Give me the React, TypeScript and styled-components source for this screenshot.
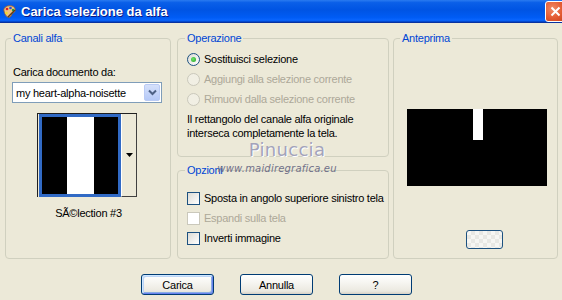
import React from 'react';
import styled, { createGlobalStyle } from 'styled-components';

const GlobalStyle = createGlobalStyle`
  html, body {
    margin: 0;
    padding: 0;
  }
  body {
    width: 562px;
    height: 300px;
    overflow: hidden;
    background: #ece9d8;
    font-family: "Liberation Sans", Arial, sans-serif;
    font-size: 11px;
    letter-spacing: -0.25px;
    color: #000;
  }
`;

const App: React.FC = () => {
    return (
        <>
            <GlobalStyle />
            <Window>
                <TitleBar>
                    <AppIcon />
                    <TitleText>Carica selezione da alfa</TitleText>
                    <CloseButton>
                        <svg width="11" height="11" viewBox="0 0 11 11">
                            <path d="M1.5 1.5 L9.5 9.5 M9.5 1.5 L1.5 9.5" stroke="#fff" strokeWidth="2" />
                        </svg>
                    </CloseButton>
                </TitleBar>

                <Body>
                    <Group $w={166} $h={227} $padL={7}>
                        <Legend>Canali alfa</Legend>
                        <FieldLabel>Carica documento da:</FieldLabel>
                        <Combo>
                            <ComboText>my heart-alpha-noisette</ComboText>
                            <ComboArrow>
                                <svg width="9" height="7" viewBox="0 0 9 7">
                                    <path d="M1 1.5 L4.5 5 L8 1.5" fill="none" stroke="#4d6185" strokeWidth="2" />
                                </svg>
                            </ComboArrow>
                        </Combo>
                        <Thumb>
                            <ThumbImage>
                                <svg width="76" height="77" viewBox="0 0 76 77">
                                    <rect width="76" height="77" fill="#000" />
                                    <rect x="25" width="27" height="77" fill="#fff" />
                                </svg>
                            </ThumbImage>
                            <ThumbDrop>
                                <svg width="7" height="4" viewBox="0 0 7 4">
                                    <path d="M0 0 H7 L3.5 4 Z" fill="#000" />
                                </svg>
                            </ThumbDrop>
                        </Thumb>
                        <Caption>SÃ©lection #3</Caption>
                    </Group>

                    <MiddleColumn>
                        <Group $w={212} $h={125} $padL={9}>
                            <Legend>Operazione</Legend>
                            <OptionList $top={4}>
                                <OptionRow>
                                    <Radio $checked />
                                    <OptionText>Sostituisci selezione</OptionText>
                                </OptionRow>
                                <OptionRow>
                                    <Radio $disabled />
                                    <OptionText $disabled>Aggiungi alla selezione corrente</OptionText>
                                </OptionRow>
                                <OptionRow>
                                    <Radio $disabled />
                                    <OptionText $disabled>Rimuovi dalla selezione corrente</OptionText>
                                </OptionRow>
                            </OptionList>
                            <Note>
                                Il rettangolo del canale alfa originale
                                <br />
                                interseca completamente la tela.
                            </Note>
                        </Group>

                        <Group $w={212} $h={95} $padL={9}>
                            <Legend>Opzioni</Legend>
                            <OptionList $top={11}>
                                <OptionRow>
                                    <Check />
                                    <OptionText>Sposta in angolo superiore sinistro tela</OptionText>
                                </OptionRow>
                                <OptionRow>
                                    <Check $disabled />
                                    <OptionText $disabled>Espandi sulla tela</OptionText>
                                </OptionRow>
                                <OptionRow>
                                    <Check />
                                    <OptionText>Inverti immagine</OptionText>
                                </OptionRow>
                            </OptionList>
                        </Group>

                        <Watermark>
                            <WatermarkName>Pinuccia</WatermarkName>
                            <WatermarkUrl>www.maidiregrafica.eu</WatermarkUrl>
                        </Watermark>
                    </MiddleColumn>

                    <Group $w={165} $h={227} $padL={8}>
                        <Legend>Anteprima</Legend>
                        <Preview>
                            <svg width="140" height="77" viewBox="0 0 140 77">
                                <rect width="140" height="77" fill="#000" />
                                <rect x="66" width="10" height="31" fill="#fff" />
                            </svg>
                        </Preview>
                        <SwatchButton />
                    </Group>
                </Body>

                <ButtonRow>
                    <DialogButton $default>Carica</DialogButton>
                    <DialogButton>Annulla</DialogButton>
                    <DialogButton>?</DialogButton>
                </ButtonRow>
            </Window>
        </>
    );
};

export default App;

const AppIcon: React.FC = () => (
    <svg width="15" height="15" viewBox="0 0 15 15">
        <path d="M2 7 C1 3 6 1 10 2 C14 3 14 8 11 9 C9 10 10 12 8 13 C5 14 3 11 2 7 Z" fill="#f0c080" stroke="#a0602a" strokeWidth="0.8" />
        <circle cx="5" cy="5" r="1.3" fill="#e02020" />
        <circle cx="8.5" cy="4" r="1.3" fill="#2050e0" />
        <circle cx="11" cy="6" r="1.2" fill="#20a040" />
        <circle cx="4.5" cy="9" r="1.2" fill="#f0e020" />
        <path d="M6 13 L13 6" stroke="#5a3a1a" strokeWidth="1.4" />
    </svg>
);

const Window = styled.div`
    width: 562px;
    height: 300px;
    display: flex;
    flex-direction: column;
    overflow: hidden;
`;

const TitleBar = styled.div`
    height: 22px;
    display: flex;
    align-items: center;
    padding-left: 2px;
    background: linear-gradient(to bottom, #2a7bf0 0%, #0a5fe8 12%, #0054e3 45%, #005cf5 80%, #0a66ff 92%, #003dbb 100%);
    border-bottom: 1px solid #0831a0;
`;

const TitleText = styled.span`
    margin-left: 4px;
    font-family: "Liberation Sans", Arial, sans-serif;
    font-size: 13px;
    font-weight: bold;
    letter-spacing: 0;
    color: #fff;
    text-shadow: 1px 1px 0 #0a1883;
`;

const CloseButton = styled.div`
    margin-left: auto;
    margin-right: -4px;
    width: 21px;
    height: 21px;
    box-sizing: border-box;
    border: 1px solid #fff;
    border-radius: 3px;
    background: radial-gradient(circle at 35% 35%, #f08a66 0%, #e35a32 55%, #c5401c 100%);
    display: flex;
    align-items: center;
    justify-content: center;
`;

const Body = styled.div`
    display: flex;
    gap: 6px;
    padding: 9px 0 0 5px;
`;

const MiddleColumn = styled.div`
    position: relative;
    flex-shrink: 0;
    display: flex;
    flex-direction: column;
    gap: 7px;
    margin-right: -2px;
`;

const Group = styled.fieldset<{ $w: number; $h: number; $padL: number }>`
    box-sizing: border-box;
    flex-shrink: 0;
    min-width: 0;
    width: ${p => p.$w}px;
    height: ${p => p.$h}px;
    margin: 0;
    padding: 0 4px 0 ${p => p.$padL}px;
    border: 1px solid #d0d0bf;
    border-radius: 4px;
    display: flex;
    flex-direction: column;
    align-items: flex-start;
`;

const Legend = styled.legend`
    padding: 0 2px;
    margin-left: -2px;
    line-height: 13px;
    color: #0046d5;
`;

const FieldLabel = styled.div`
    margin-top: 21px;
    line-height: 13px;
`;

const Combo = styled.div`
    margin: 3px 0 0 -1px;
    width: 150px;
    height: 21px;
    box-sizing: border-box;
    border: 1px solid #7f9db9;
    background: #fff;
    display: flex;
    align-items: center;
    padding: 1px;
`;

const ComboText = styled.span`
    flex: 1;
    padding-left: 2px;
`;

const ComboArrow = styled.div`
    width: 16px;
    height: 17px;
    box-sizing: border-box;
    border: 1px solid #bacbf5;
    border-radius: 2px;
    background: linear-gradient(to bottom, #d6e1fb, #b5c9f7);
    display: flex;
    align-items: center;
    justify-content: center;
`;

const Thumb = styled.div`
    margin: 10px 0 0 24px;
    display: flex;
    border-top: 1px solid #202020;
    border-left: 1px solid #202020;
`;

const ThumbImage = styled.div`
    margin-left: 1px;
    border: 3px solid #316ac5;
    display: flex;
`;

const ThumbDrop = styled.div`
    width: 16px;
    box-sizing: border-box;
    border-left: 1px solid #fff;
    border-right: 1px solid #404040;
    border-bottom: 1px solid #404040;
    display: flex;
    align-items: center;
    justify-content: center;
    padding-left: 1px;
`;

const Caption = styled.div`
    align-self: stretch;
    margin-top: 10px;
    padding-right: 2px;
    line-height: 13px;
    text-align: center;
`;

const OptionList = styled.div<{ $top: number }>`
    margin-top: ${p => p.$top}px;
    display: flex;
    flex-direction: column;
`;

const OptionRow = styled.div`
    height: 20px;
    display: flex;
    align-items: center;
    gap: 4px;
`;

const OptionText = styled.span<{ $disabled?: boolean }>`
    color: ${p => (p.$disabled ? '#aca899' : '#000')};
    white-space: nowrap;
`;

const Radio = styled.span<{ $checked?: boolean; $disabled?: boolean }>`
    width: 13px;
    height: 13px;
    box-sizing: border-box;
    border-radius: 50%;
    border: 1px solid ${p => (p.$disabled ? '#cac8bb' : '#1c5180')};
    background: ${p => (p.$disabled ? '#f1efe4' : 'linear-gradient(135deg, #dcdbd5 0%, #ffffff 100%)')};
    display: flex;
    align-items: center;
    justify-content: center;

    &::after {
        content: '';
        display: ${p => (p.$checked ? 'block' : 'none')};
        width: 5px;
        height: 5px;
        border-radius: 50%;
        background: radial-gradient(circle at 40% 40%, #6ee46a, #21a121);
    }
`;

const Check = styled.span<{ $disabled?: boolean }>`
    width: 13px;
    height: 13px;
    box-sizing: border-box;
    border: 1px solid ${p => (p.$disabled ? '#cac8bb' : '#1c5180')};
    background: ${p => (p.$disabled ? '#ffffff' : 'linear-gradient(135deg, #dcdbd5 0%, #ffffff 100%)')};
`;

const Note = styled.div`
    margin-top: 3px;
    line-height: 14px;
`;

const Watermark = styled.div`
    position: absolute;
    left: 40px;
    top: 107px;
    width: 120px;
    display: flex;
    flex-direction: column;
    align-items: center;
    pointer-events: none;
`;

const WatermarkName = styled.span`
    margin-left: 20px;
    font-family: "DejaVu Sans", Verdana, sans-serif;
    font-size: 18px;
    line-height: 22px;
    letter-spacing: 0.3px;
    color: #a3a3bb;
    text-shadow: 1px 1px 0 #ffffff;
`;

const WatermarkUrl = styled.span`
    margin-top: 1px;
    font-family: "DejaVu Sans", Verdana, sans-serif;
    font-style: italic;
    font-size: 10px;
    line-height: 13px;
    letter-spacing: 0.2px;
    color: #707088;
`;

const Preview = styled.div`
    margin: 64px 0 0 5px;
    display: flex;
`;

const SwatchButton = styled.div`
    margin: 44px 0 0 64px;
    width: 37px;
    height: 19px;
    box-sizing: border-box;
    border: 1px solid #1c5180;
    border-radius: 3px;
    background-color: #f6f6f3;
    background-image:
        linear-gradient(45deg, #e8e8e4 25%, transparent 25%, transparent 75%, #e8e8e4 75%),
        linear-gradient(45deg, #e8e8e4 25%, transparent 25%, transparent 75%, #e8e8e4 75%);
    background-size: 8px 8px;
    background-position: 0 0, 4px 4px;
`;

const ButtonRow = styled.div`
    display: flex;
    gap: 26px;
    padding: 15px 0 0 141px;
`;

const DialogButton = styled.button<{ $default?: boolean }>`
    width: 73px;
    height: 21px;
    padding: 0;
    box-sizing: border-box;
    border: 1px solid #003c74;
    border-radius: 3px;
    font-family: "Liberation Sans", Arial, sans-serif;
    font-size: 11px;
    letter-spacing: -0.25px;
    color: #000;
    background: linear-gradient(to bottom, #ffffff 0%, #f5f4ef 45%, #ebe9e0 85%, #d6d0c5 100%);
    box-shadow: ${p =>
        p.$default
            ? 'inset 1px 1px 0 #cee7ff, inset -1px -1px 0 #6982ee, inset 2px 2px 0 #bcd4f6, inset -2px -2px 0 #89ade4'
            : 'none'};
    cursor: pointer;
`;
